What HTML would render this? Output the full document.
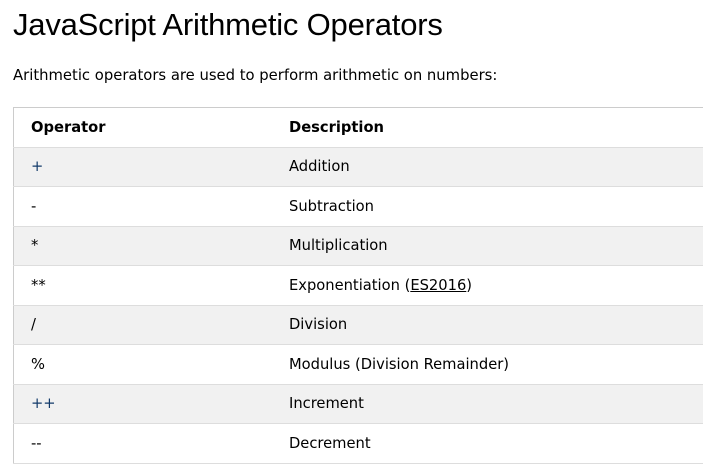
<!DOCTYPE html>
<html><head><style>
body{margin:0;background:#fff;font-family:"Liberation Sans",sans-serif;color:#000;overflow:hidden;width:703px;height:467px}
h1{position:absolute;left:13px;top:4px;margin:0;font-weight:normal;font-size:31px;letter-spacing:-0.2px;line-height:42px}
p{position:absolute;left:13px;top:66px;margin:0;font-family:"DejaVu Sans",sans-serif;font-size:14.8px;line-height:20px}
table{position:absolute;left:13px;top:107px;border-collapse:collapse;width:760px;border:1px solid #ccc;font-family:"DejaVu Sans",sans-serif;font-size:14.7px}
td,th{height:38.5px;padding:0 0 0 17px;text-align:left;border-bottom:1px solid #ddd;vertical-align:middle}
th{font-weight:bold}
td:first-child,th:first-child{width:241px}
tr:nth-child(even){background:#f1f1f1}
a{color:#000;text-decoration:underline}
</style></head><body>
<h1>JavaScript Arithmetic Operators</h1>
<p>Arithmetic operators are used to perform arithmetic on numbers:</p>
<table>
<tr><th>Operator</th><th>Description</th></tr>
<tr><td style="color:#123a6a">+</td><td>Addition</td></tr>
<tr><td>-</td><td>Subtraction</td></tr>
<tr><td>*</td><td>Multiplication</td></tr>
<tr><td>**</td><td>Exponentiation (<a>ES2016</a>)</td></tr>
<tr><td>/</td><td>Division</td></tr>
<tr><td>%</td><td>Modulus (Division Remainder)</td></tr>
<tr><td style="color:#123a6a">++</td><td>Increment</td></tr>
<tr><td>--</td><td>Decrement</td></tr>
</table>
</body></html>
